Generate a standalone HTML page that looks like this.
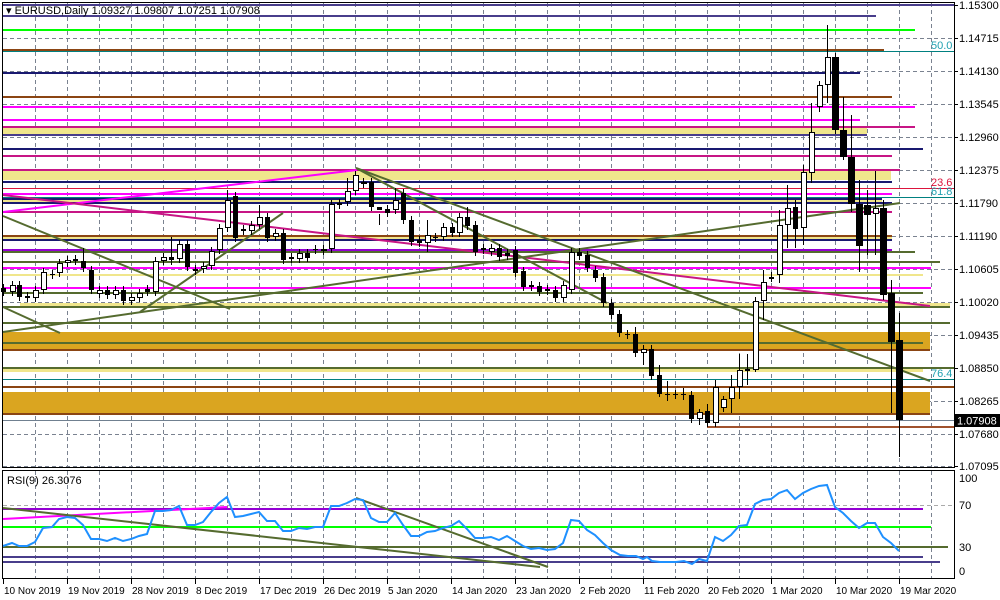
<!DOCTYPE html>
<html><head><meta charset="utf-8"><style>
html,body{margin:0;padding:0;background:#fff;width:1000px;height:600px;overflow:hidden}
svg{display:block;font-family:"Liberation Sans",sans-serif}
</style></head><body>
<svg id="s" width="1000" height="600" xmlns="http://www.w3.org/2000/svg">
<rect width="1000" height="600" fill="#fff"/>
<g id="grid" stroke="#7a8290" stroke-width="1" stroke-dasharray="4,3"></g>
<g id="bands"></g>
<g id="hl"></g>
<g fill="none" stroke-width="2">
<line x1="3" y1="212" x2="357" y2="170" stroke="#ff00ff"/>
<line x1="3" y1="195" x2="930" y2="306" stroke="#c71585"/>
<line x1="3" y1="216" x2="230" y2="309" stroke="#556b2f"/>
<line x1="3" y1="307" x2="60" y2="333" stroke="#556b2f"/>
<line x1="3" y1="332" x2="900" y2="203" stroke="#556b2f"/>
<line x1="140" y1="312" x2="283" y2="213" stroke="#556b2f"/>
<line x1="356" y1="168" x2="930" y2="381" stroke="#556b2f"/>
<line x1="356" y1="168" x2="607" y2="303" stroke="#556b2f"/>
</g>
<g id="candles"></g>
<g id="rsi"></g>
<g fill="none" stroke="#000" stroke-width="1">
<rect x="2.5" y="2.5" width="952" height="465"/>
<rect x="2.5" y="470.5" width="952" height="108"/>
</g>
<g font-size="11" fill="#20a0b0">
<text x="931" y="49">50.0</text>
<text x="931" y="186" fill="#dc143c">23.6</text>
<text x="931" y="195">61.8</text>
<text x="931" y="377">76.4</text>
</g>
<g id="axis" font-size="11" fill="#000"></g>
<rect x="955" y="414" width="45" height="13" fill="#000"/>
<text x="957" y="424.5" font-size="11" fill="#fff">1.07908</text>
<text x="6" y="14" font-size="11" fill="#000">▾ EURUSD,Daily  1.09327 1.09807 1.07251 1.07908</text>
<text x="7" y="484" font-size="11" fill="#000">RSI(9) 26.3076</text>
</svg>
<script>
var NS="http://www.w3.org/2000/svg";
function el(p,t,a){var e=document.createElementNS(NS,t);for(var k in a)e.setAttribute(k,a[k]);document.getElementById(p).appendChild(e);return e;}
for(var x=35;x<954;x+=32){el("grid","line",{x1:x+.5,y1:3,x2:x+.5,y2:467});el("grid","line",{x1:x+.5,y1:471,x2:x+.5,y2:578});}
var ys=[38,71,104,137,170,203,236,269,302,335,368,401,434,466];
ys.forEach(function(y){el("grid","line",{x1:3,y1:y+.5,x2:954,y2:y+.5});});
el("grid","line",{x1:3,y1:505.5,x2:954,y2:505.5,stroke:"#aaa"});
[[128,134,867,"#f0e68c"],[171,180,891,"#f0e68c"],[199,203,882,"#f0e68c"],[237,240,892,"#f0e68c"],[274,276,923,"#f0e68c"],[303,307,950,"#f0e68c",20],
[332,350,930,"#daa520"],[368,372,923,"#f0e68c"],[392,414,930,"#daa520"]].forEach(function(b){el("bands","rect",{x:b[4]||3,y:b[0],width:b[2]-(b[4]||3),height:b[1]-b[0],fill:b[3]});});
[[5,954,"#483d8b",2],[16,876,"#483d8b",2],[30,915,"#00ff00",2],[50,884,"#8b4513",2],[51.5,954,"#008080",1],[73,860,"#191970",2],[97,892,"#8b4513",2],
[107,915,"#ff00ff",2],[120,860,"#ff00ff",2],[127,915,"#c71585",2],[135,867,"#483d8b",2],[149,923,"#191970",2],[156,892,"#c71585",2],
[170,900,"#c71585",2],[182,892,"#191970",2],[188.5,954,"#dc143c",1],[194,892,"#ff00ff",2],[197.5,954,"#008080",1],[199,882,"#191970",2],[203,892,"#191970",2],
[212,892,"#c71585",2],[236,892,"#8b4513",2],[240,892,"#191970",2],[250,892,"#9400d3",2],[252,915,"#556b2f",2],[262,940,"#556b2f",2],
[268,931,"#ff00ff",2],[288,931,"#ff00ff",2],[293,923,"#556b2f",2],[307,950,"#556b2f",2],[323,950,"#556b2f",2],[343,923,"#556b2f",2],[350,930,"#8b4513",2],
[368,954,"#556b2f",2],[379.5,954,"#008080",1],[387,954,"#8b4513",2],[414,930,"#8b4513",2],[420.5,954,"#708090",1],[427,954,"#a0522d",2,707]
].forEach(function(l){el("hl","line",{x1:l[4]||3,y1:l[0],x2:l[1],y2:l[0],stroke:l[2],"stroke-width":l[3]});});
var C=[[3,288,292,1],[12,285,292,0],[19,285,297,1],[27,296,298,1],[35,290,298,0],[43,272,290,0],[52,274,275,1],[59,263,273,0],[67,260,263,0],[75,259,261,1],[83,261,268,1,248],[91,270,290,1],[99,290,294,0],[107,290,295,1],[115,290,295,0],[123,290,301,1],[131,297,301,0],[139,293,298,0],[147,289,292,1],[155,261,292,0],[163,257,261,0],[171,257,260,1,237,265],[179,244,259,0],[187,244,267,1],[195,269,271,1],[203,266,269,0],[211,251,266,0],[219,228,250,0],[227,200,228,0,190],[235,196,238,1],[243,229,231,1],[251,225,231,0],[259,217,225,0,205],[267,217,238,1],[275,233,237,0],[283,233,260,1],[291,257,259,1],[299,253,259,0],[307,253,258,1],[315,249,250,1],[323,249,251,0],[331,204,249,0],[339,203,205,1],[347,191,202,0,178],[355,175,191,0],[363,182,184,0],[371,182,207,1],[379,207,210,1,225],[387,209,213,1],[395,200,210,0,188],[403,193,220,1],[411,220,242,1],[419,240,243,1],[427,235,243,0,220,252],[435,237,238,1],[443,227,237,0],[452,227,233,1],[459,217,233,0],[467,217,226,1,207],[475,225,252,1],[483,248,250,1],[491,248,252,0],[499,248,257,1],[507,253,256,1],[515,250,273,1],[523,271,287,1],[531,285,287,1],[539,286,292,1],[547,289,291,1],[555,290,298,1],[563,285,298,0],[571,252,290,0],[579,252,256,1],[587,255,268,1],[595,270,278,1],[603,277,303,1],[611,303,315,1],[619,314,333,1],[627,334,335,1],[635,334,353,1,327],[643,349,353,0,345,365],[651,349,376,1],[659,375,394,1,365,397],[667,394,395,1,381,401],[675,394,395,1],[683,394,395,1,388,400],[691,395,419,1],[699,412,419,0,409,425],[707,411,423,1,404],[715,387,423,0,380],[723,399,408,0,396],[731,387,399,0,375,413],[739,370,387,0,354,399],[747,369,371,1,354,385],[755,301,370,0,297,372],[763,282,301,0,270,320],[771,277,279,1,272,282],[779,225,275,0,210,283],[787,208,225,0,185,248],[795,207,229,1,200,248],[803,172,228,0,165,245],[811,132,173,0,103,183],[819,85,107,0,81,112],[827,57,85,0,25,103],[835,57,130,1],[843,130,157,1,97,160],[851,157,204,1,115,212],[859,204,246,1,180,272],[867,205,215,1,190,255],[875,208,214,0,171,255],[883,208,295,1,200,300],[891,293,342,1,280,413],[899,340,420,1,313,457]];
C.forEach(function(c){var hi=c[4]||c[1]-4,lo=c[5]||c[2]+4;
el("candles","line",{x1:c[0]+.5,y1:hi,x2:c[0]+.5,y2:lo,stroke:"#000","stroke-width":1});
var w=c[0]>=835&&c[3]?7:5;var h=Math.max(c[2]-c[1],1);
if(c[3])el("candles","rect",{x:c[0]-Math.floor(w/2),y:c[1],width:w,height:h,fill:"#000"});
else el("candles","rect",{x:c[0]-2+.5,y:c[1]+.5,width:5,height:Math.max(h-1,1),fill:"#fff",stroke:"#000","stroke-width":1});});
[[509,923,"#9400d3"],[527,931,"#00ff00"],[547,948,"#556b2f"],[557,923,"#483d8b"],[562,940,"#483d8b"]].forEach(function(l){el("rsi","line",{x1:3,y1:l[0],x2:l[1],y2:l[0],stroke:l[2],"stroke-width":2});});
[[3,519,227,507,"#ff00ff"],[3,508,540,567,"#556b2f"],[356,498,548,567,"#556b2f"]].forEach(function(l){el("rsi","line",{x1:l[0],y1:l[1],x2:l[2],y2:l[3],stroke:l[4],"stroke-width":2});});
var R=[[3,546],[12,543],[19,546],[27,546],[35,542],[43,528],[52,527],[59,519],[67,517],[75,518],[83,525],[91,539],[99,539],[107,541],[115,538],[123,541],[131,539],[139,536],[147,534],[155,511],[163,511],[171,510],[179,506],[187,525],[195,525],[203,522],[211,512],[219,503],[227,497],[235,517],[243,516],[251,514],[259,512],[267,521],[275,521],[283,531],[291,531],[299,528],[307,529],[315,527],[323,527],[331,506],[339,506],[347,503],[355,499],[363,500],[371,518],[379,522],[387,522],[395,513],[403,525],[411,536],[419,536],[427,532],[435,531],[443,528],[451,526],[459,521],[467,529],[475,538],[483,538],[491,537],[499,540],[507,536],[515,541],[523,546],[531,549],[539,548],[547,550],[555,549],[563,543],[571,520],[579,521],[587,530],[595,535],[603,543],[611,550],[620,555],[628,556],[636,556],[643,559],[647,557],[652,561],[660,562],[668,562],[676,562],[684,561],[692,564],[699,559],[707,561],[715,537],[723,541],[731,535],[739,526],[747,525],[755,504],[763,500],[771,499],[779,493],[787,490],[795,499],[803,493],[811,489],[819,486],[827,485],[835,507],[843,513],[851,521],[859,528],[867,523],[875,523],[883,537],[891,543],[899,551]];
el("rsi","polyline",{points:R.map(function(p){return p.join(",")}).join(" "),fill:"none",stroke:"#1e90ff","stroke-width":2});
var P=["1.15300","1.14715","1.14130","1.13545","1.12960","1.12375","1.11790","1.11190","1.10605","1.10020","1.09435","1.08850","1.08265","1.07680","1.07095"];
var PY=[5,38,71,104,137,170,203,236,269,302,335,368,401,434,466];
P.forEach(function(t,i){var e=el("axis","text",{x:959,y:PY[i]+4});e.textContent=t;el("axis","line",{x1:954,y1:PY[i]+.5,x2:958,y2:PY[i]+.5,stroke:"#000"});});
[["100",478],["70",505],["30",547],["0",571]].forEach(function(r){var e=el("axis","text",{x:959,y:r[1]+4});e.textContent=r[0];});
var D=["10 Nov 2019","19 Nov 2019","28 Nov 2019","8 Dec 2019","17 Dec 2019","26 Dec 2019","5 Jan 2020","14 Jan 2020","23 Jan 2020","2 Feb 2020","11 Feb 2020","20 Feb 2020","1 Mar 2020","10 Mar 2020","19 Mar 2020"];
D.forEach(function(t,i){var x=3+64*i;var e=el("axis","text",{x:x+1,y:594,"font-size":"10"});e.textContent=t;el("axis","line",{x1:x+.5,y1:579,x2:x+.5,y2:584,stroke:"#000"});});
</script>
</body></html>
